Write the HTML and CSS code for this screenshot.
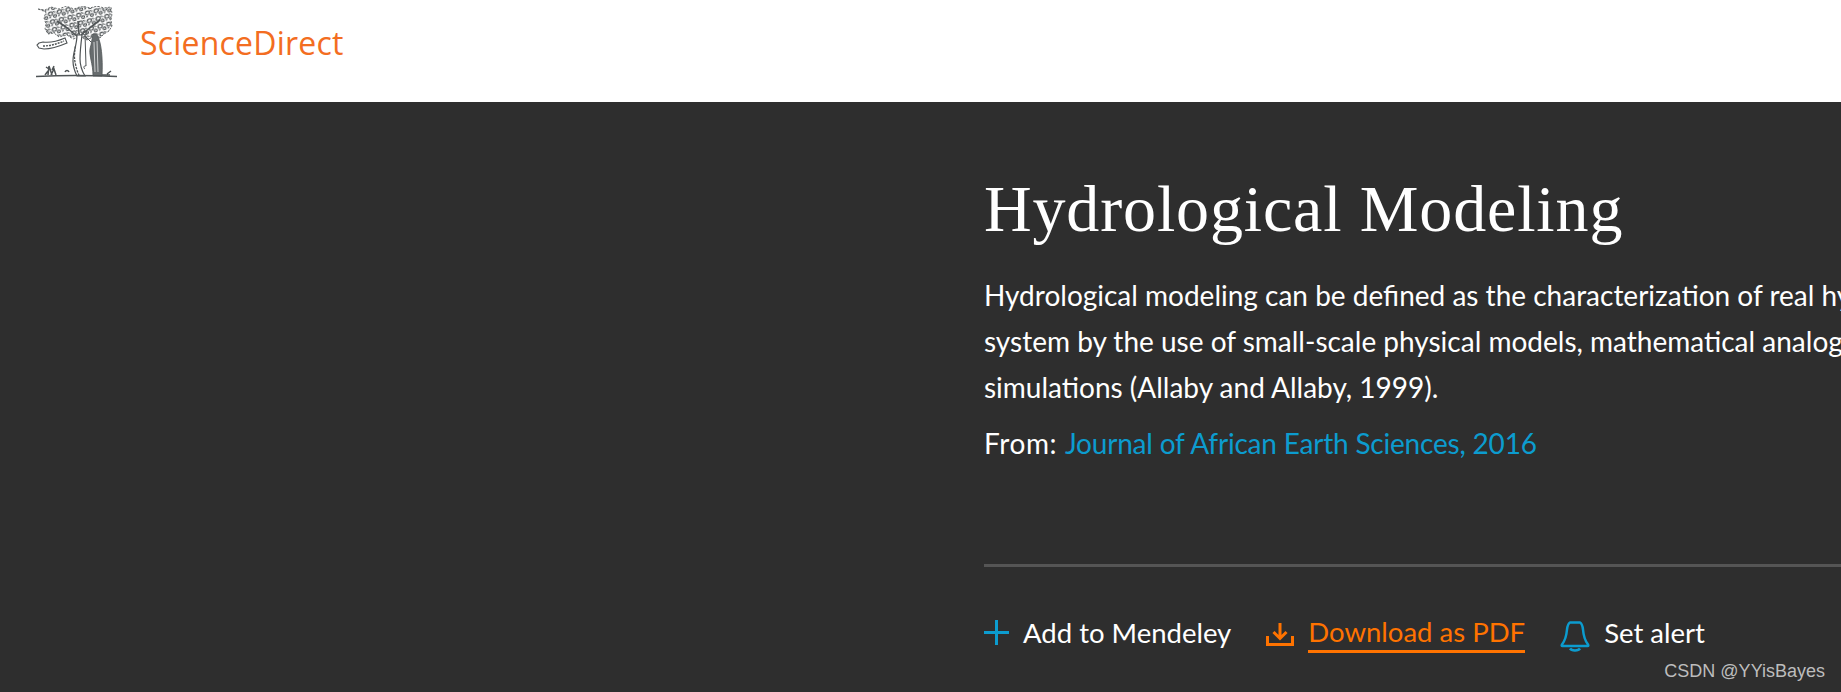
FILE: index.html
```html
<!DOCTYPE html>
<html lang="en">
<head>
    <meta charset="UTF-8">
    <meta name="viewport" content="width=device-width, initial-scale=1.0">
    <title>Hydrological Modeling - ScienceDirect</title>
    <link rel="stylesheet" href="styles.css">
</head>
<body>
    <header class="site-header">
        <svg class="logo" viewBox="0 0 81 72" fill="none" stroke="#4f5456" aria-hidden="true">
            <defs>
                <pattern id="leaves" width="9" height="8" patternUnits="userSpaceOnUse" patternTransform="rotate(-14)">
                    <path stroke-width="1.200" d="M1 3c1-2 3-2 4-1s0 3-2 3-2-1-2-2zM5.500 6c1-1.500 2.500-1.500 3-.5s-.5 2-1.500 2-1.500-.5-1.500-1.500zM6 1.500l2.500 1M1 7l2-.5"/>
                </pattern>
            </defs>
            <!-- crown -->
            <path fill="url(#leaves)" stroke-width=".8" stroke-dasharray="2 1.500" d="M2 3l7 1 6-3 8 2 7-3 8 3 8-3 8 2 7-2 7 2 7-1 1 7-1 6 1 6-3 5-5 3-4 4-7-1-6 3-6-3-8 2-6-4-8 2-5-4-6 1-3-5 1-5-2-6 2-6z"/>
            <!-- branches and trunk -->
            <path stroke-width="1.600" d="M42 31L30 21M43 28l-1-13M45 29l10-8M55 21l9-7M30 21l-9-6"/>
            <path fill="#fff" stroke-width="1.200" d="M41 29c0 10-4 17-4 26 0 7 2 11 4 15h8c-3-5-5-10-5-17 0-8 1-16 2-24z"/>
            <path stroke-width="1.300" stroke-dasharray="2.500 1" d="M39.500 40c-1 6-1.500 11-.5 16s2 9 4 13"/>
            <!-- banner -->
            <path fill="#fff" stroke-width="1.100" d="M3 37l4-1c7 1 15-1 22-4l2 5c-7 3-15 6-23 6l-5-1-2-3z"/>
            <path stroke-width="1.400" stroke-dasharray="2 1" d="M7 40c7 0 14-2 21-5"/>
            <!-- figure -->
            <path fill="#676c6e" stroke-width=".8" d="M57 28c3-1 5 1 5 3 3 6 5 20 4 39h-9c0-7-1-11-2-16-1-6-2-9 0-15z"/>
            <path stroke="#fff" stroke-width=".7" d="M58 36l1 30M61 35l1 31"/>
            <path stroke-width="1" d="M55 36l-5-5M49 28l1 32M50 60c-2-1-3 2-1 3"/>
            <circle cx="49" cy="27" r="2" stroke-width="1"/>
            <!-- ground and plants -->
            <path stroke-width="1.500" d="M0 70.500c20-1 60-1 81 0"/>
            <path stroke-width="1.500" d="M12 69l1-9 3 9M15 69l3-6 2 6M9 69l3-4M13 63l-3-2M16 64l2-4M29 66c1-2 3-2 4 0M71 68l4-3M66 69h8"/>
        </svg>
        <span class="brand">ScienceDirect</span>
    </header>

    <main class="topic">
        <h1>Hydrological Modeling</h1>
        <p class="summary">Hydrological modeling can be defined as the characterization of real hydrologic features and<br>
        system by the use of small-scale physical models, mathematical analogues and computer<br>
        simulations (Allaby and Allaby, 1999).</p>
        <p class="source">From: <a href="#">Journal of African Earth Sciences, 2016</a></p>
        <hr class="rule">
        <div class="actions">
            <a class="action" href="#">
                <svg class="icon" width="25" height="25" viewBox="0 0 25 25" fill="none" stroke="#0c9ccf" stroke-width="3"><path d="M12.500 0v25M0 12.500h25"/></svg>
                <span>Add to Mendeley</span>
            </a>
            <a class="action pdf" href="#">
                <svg class="icon icon-down" width="28" height="23" viewBox="0 0 28 23" fill="none" stroke="#ff7300" stroke-width="3"><path d="M14 0v15M7.500 9l6.500 6.500L20.500 9M1.500 13v8.500h25V13"/></svg>
                <span class="pdf-label">Download as PDF</span>
            </a>
            <a class="action" href="#">
                <svg class="icon icon-bell" width="30" height="31" viewBox="0 0 30 31" fill="none" stroke="#0c9ccf" stroke-width="2.500"><path d="M10 1.500h10c2 1 2.500 3 3 7 .5 6 1 10 5 15 .5 1 .5 1.500-.5 1.500h-25c-1 0-1-.5-.5-1.500 4-5 4.500-9 5-15 .5-4 1-6 3-7zM10 27.500c1.500 2.500 8.500 2.500 10 0"/></svg>
                <span>Set alert</span>
            </a>
        </div>
    </main>

    <div class="watermark">CSDN @YYisBayes</div>
</body>
</html>
```

FILE: styles.css
```css
* {
    margin: 0;
    padding: 0;
    box-sizing: border-box;
}

html, body {
    height: 100%;
    overflow: hidden;
}

body {
    position: relative;
    display: flex;
    flex-direction: column;
    background: #2e2e2e;
    font-family: 'Lato', 'Noto Sans', sans-serif;
    color: #fff;
}

/* Header */
.site-header {
    display: flex;
    align-items: center;
    gap: 23px;
    height: 102px;
    padding: 0 0 18px 36px;
    background: #fff;
}

.logo {
    width: 81px;
    height: 72px;
}

.brand {
    font-family: 'Open Sans', sans-serif;
    font-size: 32px;
    letter-spacing: 0.2px;
    color: #f36d21;
}

/* Topic */
.topic {
    flex: 1;
    padding: 71px 0 0 984px;
    overflow: hidden;
    white-space: nowrap;
}

h1 {
    font-family: 'Liberation Serif', serif;
    font-size: 66px;
    font-weight: 400;
    line-height: 72px;
    letter-spacing: 0.85px;
    margin-bottom: 27px;
}

.summary {
    font-size: 28px;
    line-height: 46px;
}

.source {
    font-size: 28px;
    line-height: 46px;
    letter-spacing: 0.6px;
    margin-top: 10px;
}

.source a {
    letter-spacing: -0.2px;
    color: #0c9ccf;
    text-decoration: none;
}

.rule {
    border: none;
    height: 3px;
    background: #555;
    margin-top: 98px;
}

/* Actions */
.actions {
    display: flex;
    align-items: center;
    gap: 35px;
    margin-top: 45px;
}

.action {
    display: flex;
    align-items: center;
    gap: 14px;
    font-size: 27.5px;
    color: #fff;
    text-decoration: none;
}

.icon-down {
    margin-top: 4px;
}

.icon-bell {
    margin-top: 8px;
}

.pdf {
    color: #ff7300;
}

.pdf-label {
    padding: 3px 0 2px;
    border-bottom: 3px solid #ff7300;
}

/* Watermark */
.watermark {
    position: absolute;
    right: 16px;
    bottom: 10px;
    font-family: 'Liberation Sans', sans-serif;
    font-size: 18px;
    color: #bdbdbd;
}
```
